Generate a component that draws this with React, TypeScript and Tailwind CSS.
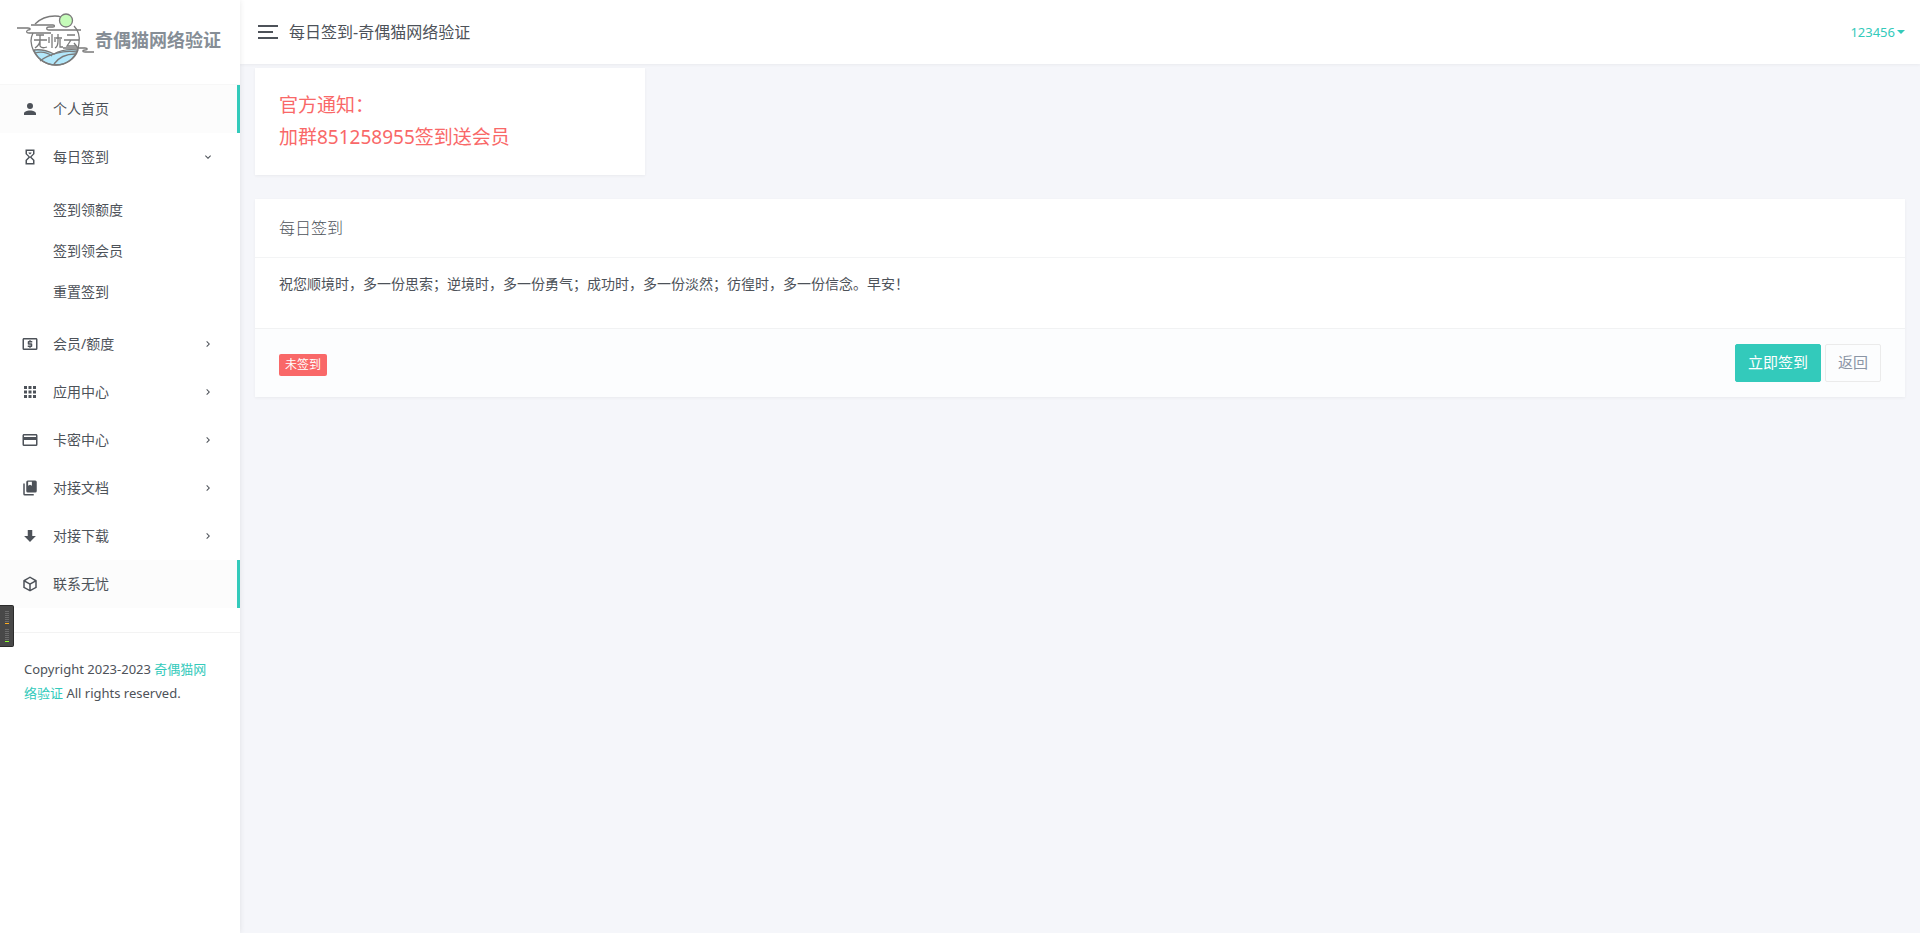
import { useState } from "react";

const icons = {
  account:
    "M12,4A4,4 0 0,1 16,8A4,4 0 0,1 12,12A4,4 0 0,1 8,8A4,4 0 0,1 12,4M12,14C16.42,14 20,15.79 20,18V20H4V18C4,15.79 7.58,14 12,14Z",
  timer:
    "M6,2V8H6V8L10,12L6,16V16H6V22H18V16H18V16L14,12L18,8V8H18V2H6M16,16.5V20H8V16.5L12,12.5L16,16.5M12,11.5L8,7.5V4H16V7.5L12,11.5M10,6H14V6.75L12,8.75L10,6.75V6Z",
  atm: "M11,17H13V16H14A1,1 0 0,0 15,15V12A1,1 0 0,0 14,11H11V10H15V8H13V7H11V8H10A1,1 0 0,0 9,9V12A1,1 0 0,0 10,13H13V14H9V16H11V17M20,4H4C2.89,4 2,4.89 2,6V18A2,2 0 0,0 4,20H20A2,2 0 0,0 22,18V6C22,4.89 21.1,4 20,4M20,18H4V6H20V18Z",
  apps: "M16,20H20V16H16M16,14H20V10H16M10,8H14V4H10M16,8H20V4H16M10,14H14V10H10M4,14H8V10H4M4,20H8V16H4M10,20H14V16H10M4,8H8V4H4V8Z",
  card: "M20,8H4V6H20M20,18H4V12H20M20,4H4C2.89,4 2,4.89 2,6V18A2,2 0 0,0 4,20H20A2,2 0 0,0 22,18V6C22,4.89 21.1,4 20,4Z",
  book: "M9,2H19A2,2 0 0,1 21,4V16A2,2 0 0,1 19,18H9A2,2 0 0,1 7,16V4A2,2 0 0,1 9,2M9.500,3.500V9L12,7.500L14.500,9V3.500ZM17,20V22H5A2,2 0 0,1 3,20V6H5V20H17Z",
  download: "M9,4H15V12H19.84L12,19.84L4.16,12H9V4Z",
  cube: "M21,16.5C21,16.88 20.79,17.21 20.47,17.38L12.57,21.82C12.41,21.94 12.21,22 12,22C11.79,22 11.59,21.94 11.43,21.82L3.53,17.38C3.21,17.21 3,16.88 3,16.5V7.5C3,7.12 3.21,6.79 3.53,6.62L11.43,2.18C11.59,2.06 11.79,2 12,2C12.21,2 12.41,2.06 12.57,2.18L20.47,6.62C20.79,6.79 21,7.12 21,7.5V16.5M12,4.15L6.04,7.5L12,10.85L17.96,7.5L12,4.15M5,15.91L11,19.29V12.58L5,9.21V15.91M19,15.91V9.21L13,12.58V19.29L19,15.91Z",
  chevron: "M8.59,16.58L13.17,12L8.59,7.41L10,6L16,12L10,18L8.59,16.58Z",
};

type IconName = keyof typeof icons;

type MenuItem = {
  label: string;
  icon: IconName;
  active?: boolean;
  children?: string[];
};

const menu: MenuItem[] = [
  { label: "个人首页", icon: "account", active: true },
  { label: "每日签到", icon: "timer", children: ["签到领额度", "签到领会员", "重置签到"] },
  { label: "会员/额度", icon: "atm", children: [] },
  { label: "应用中心", icon: "apps", children: [] },
  { label: "卡密中心", icon: "card", children: [] },
  { label: "对接文档", icon: "book", children: [] },
  { label: "对接下载", icon: "download", children: [] },
  { label: "联系无忧", icon: "cube", active: true },
];

function Icon({ name, className }: { name: IconName; className: string }) {
  return (
    <svg viewBox="0 0 24 24" fill="currentColor" fillRule="evenodd" className={className} aria-hidden="true">
      <path d={icons[name]} />
    </svg>
  );
}

function Logo() {
  return (
    <svg viewBox="0 0 78 54" className="w-[78px] h-[54px] shrink-0" fill="none" stroke="#7a7a7a" strokeWidth="1.3" aria-hidden="true">
      <path d="M17 37C24 36 31 38 37 41C45 36 53 36 61 37C58 46 49 52 39 52C29 52 20 46 17 37Z" fill="#b3e8fb" />
      <path d="M18 40C25 38 31 40 35 43M23 48C32 41 46 37 60 39M37 51C42 44 49 41 58 41" />
      <path d="M18 11C23 6 30 3 38 3C41 3 42 3 44 4M57 13C61 17 63 23 62 30C61 43 51 52 39 52C26 52 15 42 14 28C14 25 15 22 16 20" />
      <circle cx="49" cy="7.500" r="6.500" fill="#c5fcb9" />
      <path d="M0 15H11C14 15 14 17 11 17C9 18 9 20 12 20H34M14 12H36C38 12 38 14 36 14H32C29 14 29 17 32 17H64" />
      <path d="M46 35H68C71 35 71 37 68 37C65 37 65 39 68 39H77" />
      <g strokeWidth="1.300">
        <path d="M19 22H27M17 27H30M23 22V27C23 31 21 33 18 35M23 28V33C24 35 27 35 30 34" />
        <path d="M35 21V35M32 24V30M38 24V29M41 21V28C41 32 40 34 38 35M39 25H45M43 26V34H46" />
        <path d="M50 22H58M47 27H62M54 27L50 33H59M57 30L61 35" />
      </g>
    </svg>
  );
}

function Sidebar() {
  const [openIndex, setOpenIndex] = useState<number | null>(1);

  return (
    <aside className="relative z-10 w-60 shrink-0 bg-white shadow-[0_0_6px_rgba(0,0,0,0.09)]">
      <a href="#" className="flex items-center h-[85px] pl-[17px] pb-1 border-b border-[#f7f7f7]">
        <Logo />
        <span className="text-lg font-bold text-[#868e96] whitespace-nowrap">奇偶猫网络验证</span>
      </a>

      <nav>
        <ul>
          {menu.map((item, i) => (
            <li key={item.label}>
              <button
                onClick={() => setOpenIndex(openIndex === i ? null : i)}
                className={`w-full h-12 flex items-center pl-[21px] pr-[26px] text-left ${
                  item.active ? "bg-[#fcfcfc] border-r-3 border-[#33cabb]" : ""
                }`}
              >
                <Icon name={item.icon} className="w-[18px] h-[18px] mr-[14px]" />
                <span className="flex-1">{item.label}</span>
                {item.children && (
                  <Icon name="chevron" className={`w-3 h-3 ${openIndex === i ? "rotate-90" : ""}`} />
                )}
              </button>
              {openIndex === i && item.children && item.children.length > 0 && (
                <ul className="pt-2 pb-2">
                  {item.children.map((child) => (
                    <li key={child}>
                      <a href="#" className="flex items-center h-[41px] pl-[53px]">
                        {child}
                      </a>
                    </li>
                  ))}
                </ul>
              )}
            </li>
          ))}
        </ul>
      </nav>

      <div className="mt-6 border-t border-[#f3f3f3] px-6 pt-6 text-[13px] leading-6">
        Copyright 2023-2023{" "}
        <a href="#" className="text-[#33cabb]">
          奇偶猫网络验证
        </a>{" "}
        All rights reserved.
      </div>
    </aside>
  );
}

function LevelMeter({ lamp }: { lamp: string }) {
  return (
    <div className="w-1 flex flex-col gap-px">
      {[0, 1, 2, 3, 4, 5].map((n) => (
        <span key={n} className="h-px bg-[#6b6b6b]" />
      ))}
      <span className={`h-px ${lamp}`} />
    </div>
  );
}

export default function App() {
  return (
    <div className="min-h-screen flex bg-[#f5f6fa] text-sm text-[#4d5259] font-['Noto_Sans','Noto_Sans_CJK_SC',sans-serif]">
      <Sidebar />

      <div className="flex-1 min-w-0">
        <header className="h-16 flex items-center pl-[18px] pr-[15px] bg-white shadow-[0_1px_3px_rgba(0,0,0,0.05)]">
          <button aria-label="菜单" className="w-5 flex flex-col gap-1 mr-[11px]">
            <span className="w-5 h-0.5 bg-[#4d5259]" />
            <span className="w-[15px] h-0.5 bg-[#4d5259]" />
            <span className="w-5 h-0.5 bg-[#4d5259]" />
          </button>
          <h1 className="flex-1 text-base">每日签到-奇偶猫网络验证</h1>
          <button className="flex items-center gap-0.5 text-[13px] text-[#33cabb]">
            123456
            <span className="border-x-4 border-t-4 border-x-transparent border-t-[#33cabb]" />
          </button>
        </header>

        <main className="px-[15px] pt-1">
          <div className="-mx-[15px] flex">
            <div className="w-1/4 px-[15px]">
              <div className="bg-white shadow-[0_1px_3px_rgba(0,0,0,0.05)] px-6 pt-[21px] pb-[22px] text-[19px] leading-8 text-[#f96868]">
                <p>官方通知：</p>
                <p>加群851258955签到送会员</p>
              </div>
            </div>
          </div>

          <section className="mt-6 bg-white shadow-[0_1px_3px_rgba(0,0,0,0.05)]">
            <h2 className="h-[59px] flex items-center px-6 border-b border-[#f3f4f5] text-base font-light">每日签到</h2>
            <p className="px-6 pt-[15px] pb-[33px] leading-[22px]">
              祝您顺境时，多一份思索；逆境时，多一份勇气；成功时，多一份淡然；彷徨时，多一份信念。早安！
            </p>
            <div className="flex items-center justify-between px-6 py-[15px] bg-[#fcfdfe] border-t border-[#f1f2f3]">
              <span className="mt-1 px-1.5 rounded-xs bg-[#f96868] text-xs leading-[22px] text-white">未签到</span>
              <div className="flex gap-1 text-[15px]">
                <button className="h-[38px] px-3 border border-[#33cabb] rounded-xs bg-[#33cabb] text-white">立即签到</button>
                <button className="h-[38px] px-3 border border-[#ebebeb] rounded-xs text-[#8b95a5]">返回</button>
              </div>
            </div>
          </section>
        </main>
      </div>

      <div className="fixed z-20 left-0 top-[605px] w-[14px] h-[42px] flex flex-col items-center justify-center gap-[5px] rounded-r-xs border border-l-0 border-[#2b2b2b] bg-[#484848]">
        <LevelMeter lamp="bg-[#ffad1f]" />
        <LevelMeter lamp="bg-[#8cff2b]" />
      </div>
    </div>
  );
}
